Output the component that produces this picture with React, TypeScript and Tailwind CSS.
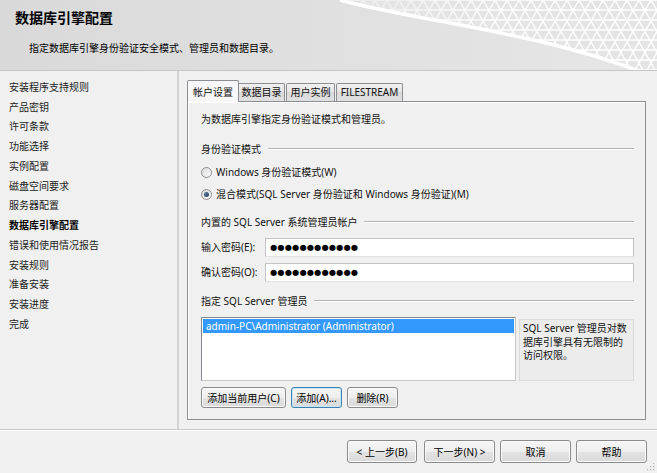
import type { ReactNode } from 'react';
import clsx from 'clsx';

const navItems = [
	'安装程序支持规则',
	'产品密钥',
	'许可条款',
	'功能选择',
	'实例配置',
	'磁盘空间要求',
	'服务器配置',
	'数据库引擎配置',
	'错误和使用情况报告',
	'安装规则',
	'准备安装',
	'安装进度',
	'完成',
];

const tabs = ['帐户设置', '数据目录', '用户实例', 'FILESTREAM'];

// mesh lines for the banner decoration (local coords 0..330 x 0..70)
const meshLines: string[] = [];
for (let k = -12; k < 40; k++) {
	const x0 = k * 12;
	meshLines.push(`M${x0} 0 L${x0 + 40} 70`);
	meshLines.push(`M${x0} 0 L${x0 - 40} 70`);
}
for (let y = 0; y <= 70; y += 10) meshLines.push(`M0 ${y} L330 ${y}`);

function Btn({ children, className, focused }: { children: ReactNode; className?: string; focused?: boolean }) {
	return (
		<button
			type="button"
			className={clsx(
				'flex items-center justify-center rounded-[3px] border text-[10px] leading-none text-black bg-[linear-gradient(#f5f5f5,#eeeeee_50%,#e3e3e3_50%,#dadada)]',
				focused
					? 'border-[#3c7fb1] shadow-[inset_0_0_0_1px_#c6e8fa]'
					: 'border-[#8a8a8a] shadow-[inset_0_0_0_1px_#fbfbfb]',
				className,
			)}
		>
			{children}
		</button>
	);
}

function Radio({ checked, label }: { checked?: boolean; label: string }) {
	return (
		<div className="flex h-[16px] items-center">
			<span className="flex h-[11px] w-[11px] items-center justify-center rounded-full border border-[#8e8f8f] bg-[linear-gradient(135deg,#d8d8d8,#ffffff)]">
				{checked ? <span className="h-[5px] w-[5px] rounded-full bg-[radial-gradient(circle_at_35%_35%,#5a7a96,#1b3550)]" /> : null}
			</span>
			<span className="ml-[4px]">{label}</span>
		</div>
	);
}

function GroupLabel({ label, className }: { label: string; className?: string }) {
	return (
		<div className={clsx('flex h-[14px] items-center', className)}>
			<span>{label}</span>
			<div className="ml-[7px] flex-1 border-t border-b border-[#b4b4b4] border-b-white" />
		</div>
	);
}

function Dots() {
	return <span className="font-['DejaVu_Sans',sans-serif] text-[8.2px] tracking-[0.2px] text-black">●●●●●●●●●●●●</span>;
}

function HeaderMesh() {
	return (
		<svg className="pointer-events-none absolute right-0 top-0" width="330" height="70" viewBox="0 0 330 70">
			<defs>
				<clipPath id="wave-region">
					<path d="M13 0 C 93 22, 218 32, 330 78 L 330 0 Z" />
				</clipPath>
				<linearGradient id="wave-fade" x1="0" y1="0" x2="330" y2="0" gradientUnits="userSpaceOnUse">
					<stop offset="0" stopColor="#ffffff" stopOpacity="0.3" />
					<stop offset="0.5" stopColor="#ffffff" stopOpacity="0.9" />
					<stop offset="1" stopColor="#ffffff" stopOpacity="1" />
				</linearGradient>
			</defs>
			<g clipPath="url(#wave-region)">
				<path d="M13 0 C 93 22, 218 32, 330 78 L 330 0 Z" fill="#e4e4e4" />
				<path d={meshLines.join(' ')} stroke="url(#wave-fade)" strokeWidth="1.4" fill="none" />
			</g>
			<path d="M13 0 C 93 22, 218 32, 330 78" stroke="#ffffff" strokeWidth="3.5" fill="none" />
		</svg>
	);
}

export default function App() {
	return (
		<div className="flex h-[473px] w-[657px] flex-col overflow-hidden bg-[#f0f0f0] font-['Noto_Sans','Noto_Sans_CJK_SC',sans-serif] text-[10px] text-[#111]">
			<header className="relative h-[71px] shrink-0 border-b border-[#c6c6c6] bg-[linear-gradient(90deg,#d9d9d9,#e0e0e0_50%,#e6e6e6)]">
				<div className="pl-[15px] pt-[9px] text-[14px] font-bold leading-[18px] text-black">数据库引擎配置</div>
				<div className="pl-[29px] pt-[14px] text-[10px] leading-[14px] text-black">指定数据库引擎身份验证安全模式、管理员和数据目录。</div>
				<HeaderMesh />
			</header>

			<div className="flex h-[359px] shrink-0 border-b border-[#c8c8c8]">
				<nav className="w-[179px] shrink-0 border-r-2 border-[#d4d4d4] pl-[9px] pt-[6px]">
					{navItems.map((item) => (
						<div
							key={item}
							className={clsx('flex h-[19.75px] items-center leading-none', item === '数据库引擎配置' ? 'font-bold text-black' : 'text-[#222]')}
						>
							{item}
						</div>
					))}
				</nav>

				<main className="flex min-w-0 flex-1 flex-col pb-[9px] pl-[8px] pr-[11px] pt-[9px]">
					<div className="flex h-[21px] items-end">
						{tabs.map((t, i) =>
							i === 0 ? (
								<div
									key={t}
									className="relative z-10 -mb-px flex h-[22px] w-[52px] items-start justify-center rounded-t-[2px] border border-b-0 border-[#8c8e94] bg-[#f7f7f7] pt-[4px]"
								>
									{t}
								</div>
							) : (
								<div
									key={t}
									className={clsx(
										'flex h-[18px] items-center justify-center rounded-t-[2px] border border-b-0 border-[#8c8e94] bg-[linear-gradient(#f0f0f0,#e5e5e5_50%,#d9d9d9_50%,#e0e0e0)]',
										i === 1 && 'w-[47px] -ml-px',
										i === 2 && 'w-[49px] ml-[1px]',
										i === 3 && 'w-[67px] ml-[1px]',
									)}
								>
									{t}
								</div>
							),
						)}
					</div>

					<div className="flex flex-1 flex-col border border-[#8c8e94] bg-[#f0f0f0] pl-[13px] pr-[11px] shadow-[inset_1px_1px_0_#ffffff]">
						<div className="mt-[10px] flex h-[14px] items-center">为数据库引擎指定身份验证模式和管理员。</div>

						<GroupLabel label="身份验证模式" className="mt-[16px]" />
						<div className="mt-[8px]">
							<Radio label="Windows 身份验证模式(W)" />
						</div>
						<div className="mt-[6px]">
							<Radio checked label="混合模式(SQL Server 身份验证和 Windows 身份验证)(M)" />
						</div>

						<GroupLabel label="内置的 SQL Server 系统管理员帐户" className="mt-[13px]" />
						<div className="mt-[9px] flex h-[19px] items-center">
							<span className="w-[64px] shrink-0">输入密码(E):</span>
							<div className="flex h-full flex-1 items-center border border-[#c3c3c3] border-b-[#e3e3e3] bg-white pl-[4px]">
								<Dots />
							</div>
						</div>
						<div className="mt-[6px] flex h-[19px] items-center">
							<span className="w-[64px] shrink-0">确认密码(O):</span>
							<div className="flex h-full flex-1 items-center border border-[#c3c3c3] border-b-[#e3e3e3] bg-white pl-[4px]">
								<Dots />
							</div>
						</div>

						<GroupLabel label="指定 SQL Server 管理员" className="mt-[12px]" />
						<div className="mt-[9px] flex h-[64px] items-start">
							<div className="h-full w-[315px] shrink-0 border border-[#828790] border-b-[#c8c8c8] border-r-[#c8c8c8] bg-white p-[1px]">
								<div className="flex h-[14px] items-center bg-[#3399ff] pl-[3px] text-white">admin-PC\Administrator (Administrator)</div>
							</div>
							<div className="ml-[3px] mt-[2px] h-[62px] flex-1 border border-[#dadada] bg-[#ececec] pl-[3px] pt-[2px] leading-[13.5px]">
								SQL Server 管理员对数
								<br />
								据库引擎具有无限制的
								<br />
								访问权限。
							</div>
						</div>

						<div className="mt-[6px] flex h-[21px]">
							<Btn className="w-[85px]">添加当前用户(C)</Btn>
							<Btn focused className="ml-[5px] w-[51px]">
								添加(A)...
							</Btn>
							<Btn className="ml-[5px] w-[51px]">删除(R)</Btn>
						</div>
					</div>
				</main>
			</div>

			<footer className="relative flex flex-1 items-start justify-end border-t border-white pr-[10px] pt-[9px]">
				<Btn className="h-[23px] w-[70px]">&lt; 上一步(B)</Btn>
				<Btn className="ml-[7px] h-[23px] w-[71px]">下一步(N) &gt;</Btn>
				<Btn className="ml-[5px] h-[23px] w-[71px]">取消</Btn>
				<Btn className="ml-[5px] h-[23px] w-[71px]">帮助</Btn>
				<svg className="absolute bottom-[2px] right-[2px]" width="8" height="8" viewBox="0 0 8 8">
					<g fill="#b0b0b0">
						<rect x="6" y="0" width="1.2" height="1.2" />
						<rect x="3" y="3" width="1.2" height="1.2" />
						<rect x="6" y="3" width="1.2" height="1.2" />
						<rect x="0" y="6" width="1.2" height="1.2" />
						<rect x="3" y="6" width="1.2" height="1.2" />
						<rect x="6" y="6" width="1.2" height="1.2" />
					</g>
				</svg>
			</footer>
		</div>
	);
}
